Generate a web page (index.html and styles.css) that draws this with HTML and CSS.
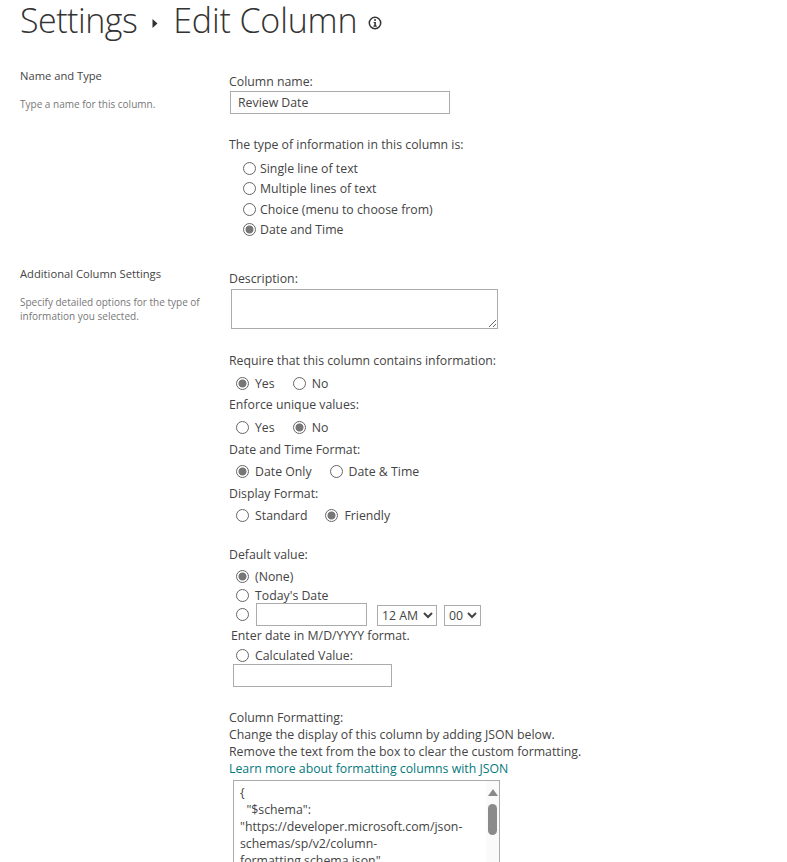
FILE: index.html
```html
<!DOCTYPE html>
<html lang="en">
  <head>
    <meta charset="UTF-8" />
    <meta name="viewport" content="width=device-width, initial-scale=1.0" />
    <title>Settings - Edit Column</title>
    <link rel="stylesheet" href="styles.css">
  </head>
  <body>
    <h1 class="page-title">
      <span>Settings</span>
      <svg class="crumb-arrow" width="6" height="9" viewBox="0 0 6 9"><path d="M0.5 0 L5.5 4.5 L0.5 9 Z" fill="#333" /></svg>
      <span class="current">Edit Column</span>
      <svg class="info-icon" width="14" height="14" viewBox="0 0 14 14">
        <circle cx="7" cy="7" r="5.7" fill="none" stroke="#333" stroke-width="1.5" />
        <rect x="6.2" y="3.2" width="1.7" height="1.7" fill="#333" />
        <path d="M5.6 6 H7.9 V9.6 H8.8 V10.8 H5.4 V9.6 H6.3 V7.1 H5.6 Z" fill="#333" />
      </svg>
    </h1>

    <section class="section section-name">
      <div class="side">
        <h2>Name and Type</h2>
        <p>Type a name for this column.</p>
      </div>
      <div class="main">
        <label class="label">Column name:</label>
        <input class="text-input name-input" type="text" value="Review Date" />
        <p class="label type-label">The type of information in this column is:</p>
        <div class="type-list">
          <label class="option"><input type="radio" name="type" />Single line of text</label>
          <label class="option"><input type="radio" name="type" />Multiple lines of text</label>
          <label class="option"><input type="radio" name="type" />Choice (menu to choose from)</label>
          <label class="option"><input type="radio" name="type" checked />Date and Time</label>
        </div>
      </div>
    </section>

    <section class="section section-extra">
      <div class="side">
        <h2>Additional Column Settings</h2>
        <p>Specify detailed options for the type of information you selected.</p>
      </div>
      <div class="main">
        <label class="label">Description:</label>
        <textarea class="desc-input"></textarea>

        <p class="label require-label">Require that this column contains information:</p>
        <div class="inline-options">
          <label class="option"><input type="radio" name="req" checked />Yes</label>
          <label class="option"><input type="radio" name="req" />No</label>
        </div>
        <p class="label">Enforce unique values:</p>
        <div class="inline-options">
          <label class="option"><input type="radio" name="uniq" />Yes</label>
          <label class="option"><input type="radio" name="uniq" checked />No</label>
        </div>
        <p class="label">Date and Time Format:</p>
        <div class="inline-options">
          <label class="option"><input type="radio" name="fmt" checked />Date Only</label>
          <label class="option"><input type="radio" name="fmt" />Date &amp; Time</label>
        </div>
        <p class="label">Display Format:</p>
        <div class="inline-options">
          <label class="option"><input type="radio" name="disp" />Standard</label>
          <label class="option"><input type="radio" name="disp" checked />Friendly</label>
        </div>

        <p class="label default-label">Default value:</p>
        <div class="default-list">
          <label class="option"><input type="radio" name="def" checked />(None)</label>
          <label class="option"><input type="radio" name="def" />Today's Date</label>
          <div class="date-row">
            <input type="radio" name="def" />
            <input class="text-input date-input" type="text" />
            <select class="hour-select"><option>12 AM</option></select>
            <select class="min-select"><option>00</option></select>
          </div>
          <p class="hint">Enter date in M/D/YYYY format.</p>
          <label class="option calc-option"><input type="radio" name="def" />Calculated Value:</label>
          <input class="text-input calc-input" type="text" />
        </div>

        <div class="format-block">
          <p>Column Formatting:</p>
          <p>Change the display of this column by adding JSON below.</p>
          <p>Remove the text from the box to clear the custom formatting.</p>
          <a href="#">Learn more about formatting columns with JSON</a>
        </div>
        <div class="json-box">
          <div class="json-text">{
  "$schema":
"https://developer.microsoft.com/json-schemas/sp/v2/column-formatting.schema.json",
  "elmType": "div"
}</div>
          <div class="json-scroll">
            <svg width="10" height="7" viewBox="0 0 10 7"><path d="M5 0 L10 7 H0 Z" fill="#8a8a8a" /></svg>
            <div class="json-thumb"></div>
          </div>
        </div>
      </div>
    </section>
  </body>
</html>
```

FILE: styles.css
```css
html,
body {
  height: 862px;
  overflow: hidden;
}

body {
  margin: 0;
  padding-left: 20px;
  font-family: "Open Sans", "Noto Sans", sans-serif;
  font-size: 12.3px;
  line-height: 17px;
  color: #444;
  background: #fff;
}

p {
  margin: 0;
}

.page-title {
  display: flex;
  align-items: center;
  height: 36px;
  margin: 2px 0 0;
  font-size: 34px;
  line-height: 36px;
  font-weight: 300;
  letter-spacing: -0.5px;
  color: #333;
}

.page-title .current {
  letter-spacing: -0.15px;
}

.crumb-arrow {
  margin: 6px 15px 0 15px;
}

.info-icon {
  margin: 6px 0 0 11px;
}

.section {
  display: grid;
  grid-template-columns: 209px 1fr;
}

.section-name {
  padding-top: 35px;
}

.section-extra {
  padding-top: 32px;
}

.side {
  margin-top: -6px;
}

.section-extra .side {
  margin-top: -5px;
}

.side h2 {
  margin: 0;
  font-size: 11.2px;
  font-weight: 400;
  line-height: 17px;
  color: #444;
}

.side p {
  width: 190px;
  margin-top: 13px;
  font-size: 10px;
  line-height: 14px;
  color: #777;
}

.main {
  min-width: 0;
}

.label {
  display: block;
  height: 17px;
}

.text-input {
  display: block;
  box-sizing: border-box;
  margin: 0;
  border: 1px solid #ababab;
  padding: 0 7px;
  font: inherit;
  color: #444;
  background: #fff;
  outline: none;
}

.name-input {
  width: 220px;
  height: 23px;
  margin: 1px 0 0 1px;
}

.type-label {
  margin-top: 22px;
}

.type-list {
  display: flex;
  flex-direction: column;
  margin: 7px 0 0 14px;
  gap: 3.4px;
}

.option {
  display: flex;
  align-items: center;
  height: 17px;
}

input[type="radio"] {
  appearance: none;
  box-sizing: border-box;
  flex: none;
  width: 13px;
  height: 13px;
  margin: 0 4px 0 0;
  border: 1px solid #666;
  border-radius: 50%;
  background: #fff;
}

input[type="radio"]:checked {
  background: radial-gradient(circle, #777 0, #777 3.6px, #fff 4.4px);
}

.desc-input {
  display: block;
  box-sizing: border-box;
  width: 267px;
  height: 40px;
  margin: 2px 0 0 2px;
  border: 1px solid #ababab;
  outline: none;
}

.require-label {
  margin-top: 23px;
}

.inline-options {
  display: flex;
  gap: 18px;
  height: 17px;
  margin: 5.4px 0 4.8px 7px;
}

.inline-options input[type="radio"] {
  margin-right: 6px;
}

.default-label {
  margin-top: 21.5px;
}

.default-list {
  margin: 5px 0 0 7px;
}

.default-list .option {
  height: 17px;
  margin-bottom: 2px;
}

.default-list input[type="radio"] {
  margin-right: 6px;
}

.date-row {
  display: flex;
  align-items: center;
  height: 23px;
  margin-top: -3px;
}

.date-input {
  width: 111px;
  height: 23px;
  margin-right: 10px;
  margin-left: 1px;
}

.date-row select {
  box-sizing: border-box;
  height: 21px;
  margin-top: 2px;
  border: 1px solid #ababab;
  border-radius: 0;
  font: inherit;
  color: #444;
  background: #fff;
}

.hour-select {
  width: 60px;
  margin-right: 7px;
}

.min-select {
  width: 37px;
}

.hint {
  margin: 1px 0 3px -5px;
}

.default-list .calc-option {
  margin-bottom: 0;
}

.calc-input {
  width: 159px;
  height: 23px;
  margin: 0 0 0 -3px;
}

.format-block {
  margin-top: 22px;
}

.format-block a {
  color: #03787c;
  text-decoration: none;
}

.json-box {
  display: flex;
  box-sizing: border-box;
  width: 267px;
  height: 120px;
  margin: 3px 0 0 4px;
  border: 1px solid #ababab;
}

.json-text {
  flex: 1;
  min-width: 0;
  padding: 3px 4px 0 6px;
  white-space: pre-wrap;
  overflow-wrap: break-word;
}

.json-scroll {
  display: flex;
  flex-direction: column;
  align-items: center;
  flex: none;
  width: 13px;
  padding-top: 8px;
  gap: 8px;
  background: #fafafa;
}

.json-thumb {
  width: 9px;
  height: 31px;
  border-radius: 5px;
  background: #8a8a8a;
}
```
